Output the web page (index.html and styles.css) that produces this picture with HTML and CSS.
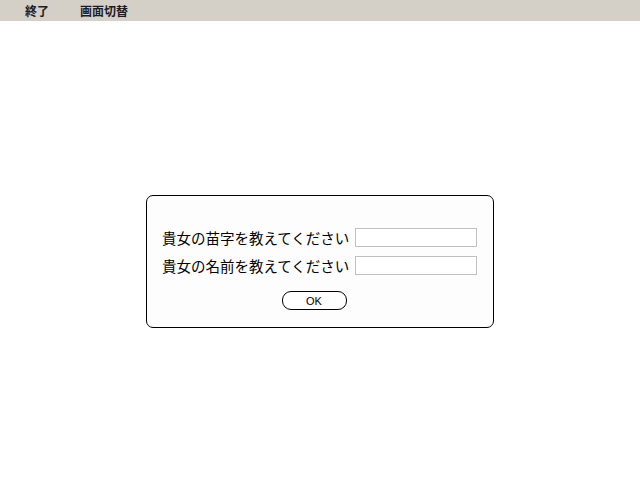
FILE: index.html
```html
<!DOCTYPE html>
<html lang="ja">

<head>
    <meta charset="UTF-8">
    <title>名前入力</title>
    <link rel="stylesheet" href="styles.css">
</head>

<body>
    <!-- Menu Bar -->
    <nav class="menu-bar">
        <span class="menu-item">終了</span>
        <span class="menu-item">画面切替</span>
    </nav>

    <!-- Name Dialog -->
    <main class="stage">
        <form class="name-dialog">
            <div class="field-grid">
                <label for="lastName">貴女の苗字を教えてください</label>
                <input type="text" id="lastName" name="lastName">

                <label for="firstName">貴女の名前を教えてください</label>
                <input type="text" id="firstName" name="firstName">
            </div>
            <button type="button" class="ok-button">OK</button>
        </form>
    </main>
</body>

</html>
```

FILE: styles.css
```css
* {
    margin: 0;
    padding: 0;
    box-sizing: border-box;
}

body {
    font-family: "Liberation Sans", "Noto Sans CJK JP", sans-serif;
    background-color: #fff;
    color: #000;
    height: 100vh;
    display: flex;
    flex-direction: column;
}

.menu-bar {
    height: 21px;
    background-color: #d4d0c8;
    display: flex;
    align-items: center;
    padding-left: 25px;
    gap: 31px;
}

.menu-item {
    font-family: "Noto Sans CJK JP", sans-serif;
    font-size: 12px;
    font-weight: 700;
    color: #1c1c28;
    line-height: 21px;
}

.stage {
    flex: 1;
    display: flex;
    align-items: center;
    justify-content: center;
}

.name-dialog {
    width: 348px;
    height: 133px;
    background-color: #fdfdfd;
    border: 1px solid #000;
    border-radius: 7px;
    padding: 32px 16px 0 15px;
    display: flex;
    flex-direction: column;
    align-items: center;
}

.field-grid {
    display: grid;
    grid-template-columns: auto 122px;
    column-gap: 4px;
    row-gap: 9px;
    align-items: center;
    width: 100%;
}

.field-grid label {
    font-family: "Noto Sans CJK JP", sans-serif;
    font-size: 14.5px;
    line-height: 19px;
    white-space: nowrap;
}

.field-grid input {
    height: 19px;
    width: 122px;
    border: 1px solid #c0c0c0;
    background-color: #fff;
    font-size: 12px;
}

.ok-button {
    margin-top: 16px;
    margin-right: 11px;
    width: 65px;
    height: 19px;
    border: 1px solid #000;
    border-radius: 9px;
    background-color: #fff;
    font-family: "Liberation Sans", sans-serif;
    font-size: 11px;
    color: #000;
}
```
